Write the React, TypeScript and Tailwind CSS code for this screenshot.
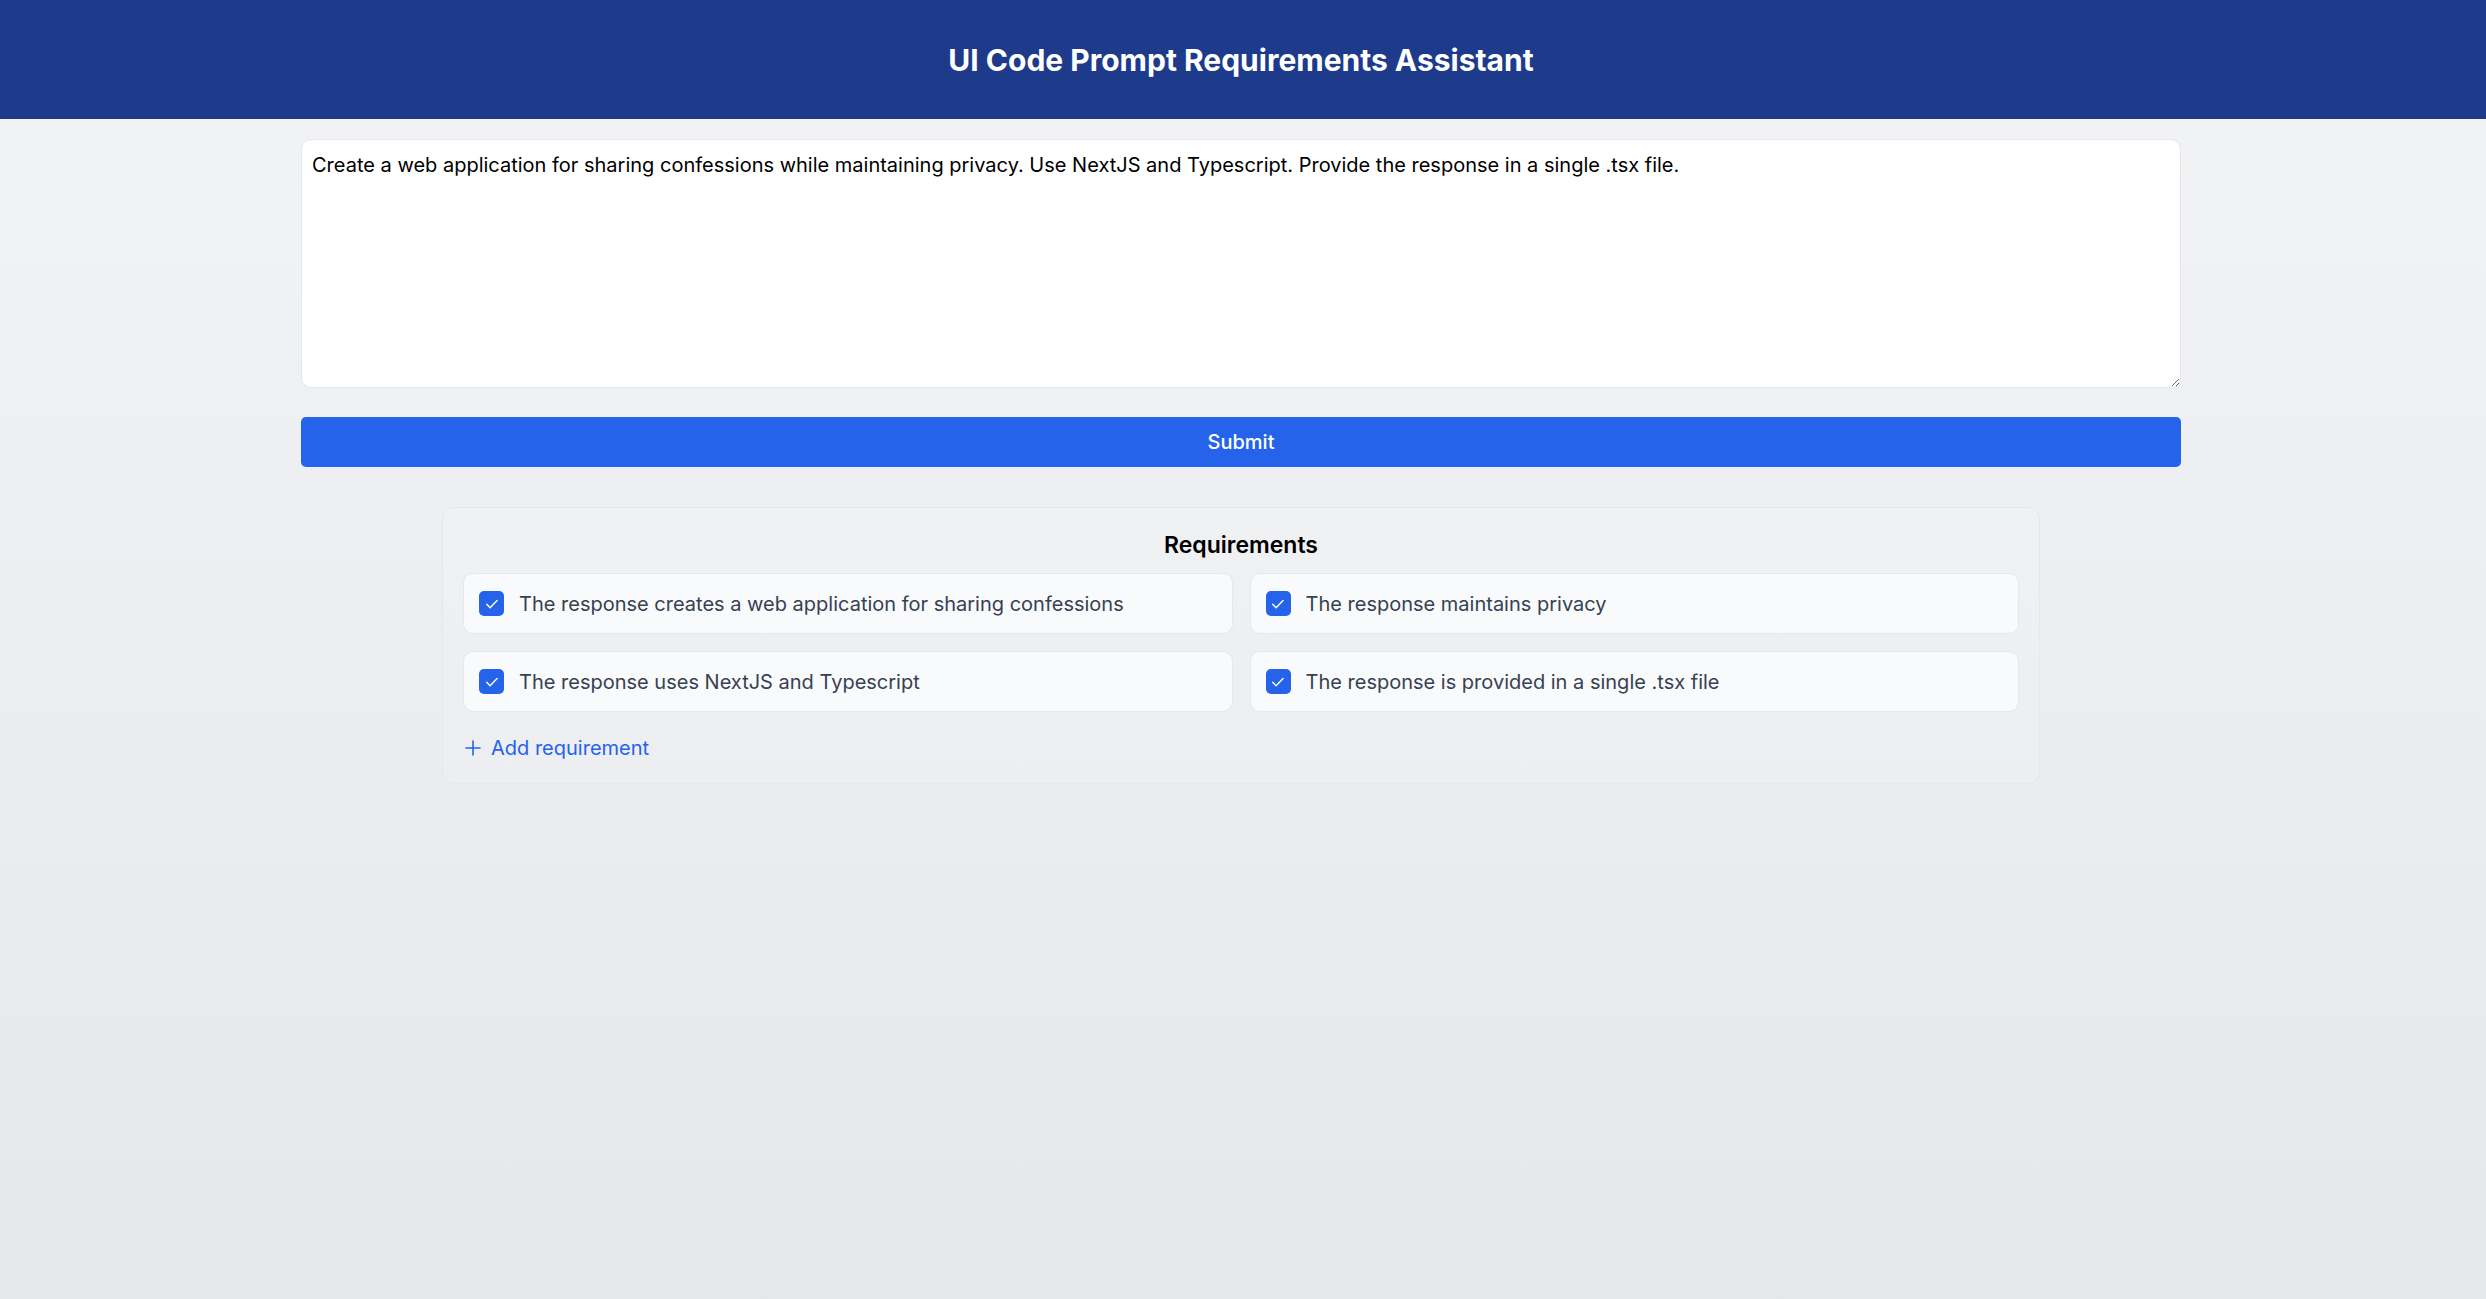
import { useState } from 'react'

const initialRequirements = [
  'The response creates a web application for sharing confessions',
  'The response maintains privacy',
  'The response uses NextJS and Typescript',
  'The response is provided in a single .tsx file',
]

function CheckBox({ checked, onToggle }: { checked: boolean; onToggle: () => void }) {
  return (
    <button
      onClick={onToggle}
      className={`flex h-[25px] w-[25px] shrink-0 items-center justify-center rounded-[5px] ${
        checked ? 'bg-[#2563eb]' : 'border border-gray-300 bg-white'
      }`}
    >
      {checked && (
        <svg width="18" height="18" viewBox="0 0 16 16" fill="none">
          <path d="M3.3 8.3l3 3 6.2-6.4" stroke="white" strokeWidth="1.3" strokeLinecap="round" strokeLinejoin="round" />
        </svg>
      )}
    </button>
  )
}

export default function App() {
  const [prompt, setPrompt] = useState(
    'Create a web application for sharing confessions while maintaining privacy. Use NextJS and Typescript. Provide the response in a single .tsx file.'
  )
  const [reqs, setReqs] = useState(initialRequirements.map((text) => ({ text, checked: true })))

  const toggle = (i: number) =>
    setReqs((prev) => prev.map((r, idx) => (idx === i ? { ...r, checked: !r.checked } : r)))

  return (
    <div className="min-h-[1299px] bg-gradient-to-b from-[#f3f4f6] to-[#e5e7eb] font-['Inter',sans-serif]">
      <header className="flex h-[119px] items-center justify-center bg-[#1e3a8a] pr-[4px]">
        <h1 className="text-[30px] font-bold leading-[40px] text-white">UI Code Prompt Requirements Assistant</h1>
      </header>

      <div className="pr-[4px]">
        <main className="mx-auto flex w-[1880px] flex-col pt-[20px]">
          <textarea
            value={prompt}
            onChange={(e) => setPrompt(e.target.value)}
            className="h-[249px] w-full rounded-[10px] border border-[#e5e7eb] bg-white px-[10px] py-[10px] text-[20px] leading-[30px] text-black outline-none"
          />

          <button className="mt-[29px] h-[50px] w-full rounded-[5px] bg-[#2563eb] text-[20px] font-medium text-white">
            Submit
          </button>

          <section className="mx-auto mt-[40px] w-[1598px] rounded-[12px] border border-[#e5e7eb] bg-white/10 p-[20px]">
            <h2 className="text-center text-[23px] font-semibold leading-[35px] text-black">Requirements</h2>
            <div className="mt-[10px] grid grid-cols-2 gap-x-[17px] gap-y-[17px]">
              {reqs.map((r, i) => (
                <div
                  key={i}
                  className="flex h-[61px] items-center gap-[15px] rounded-[10px] border border-[#e5e7eb] bg-[#f8fafc] px-[15px]"
                >
                  <CheckBox checked={r.checked} onToggle={() => toggle(i)} />
                  <span className="text-[20px] leading-[30px] text-[#374151]">{r.text}</span>
                </div>
              ))}
            </div>
            <button
              onClick={() => setReqs((prev) => [...prev, { text: 'New requirement', checked: false }])}
              className="mt-[21px] flex items-center gap-[8px] text-[20px] leading-[30px] text-[#2563eb]"
            >
              <svg width="20" height="20" viewBox="0 0 20 20" fill="none">
                <path d="M10 3v14M3 10h14" stroke="currentColor" strokeWidth="1.6" strokeLinecap="round" />
              </svg>
              Add requirement
            </button>
          </section>
        </main>
      </div>
    </div>
  )
}
